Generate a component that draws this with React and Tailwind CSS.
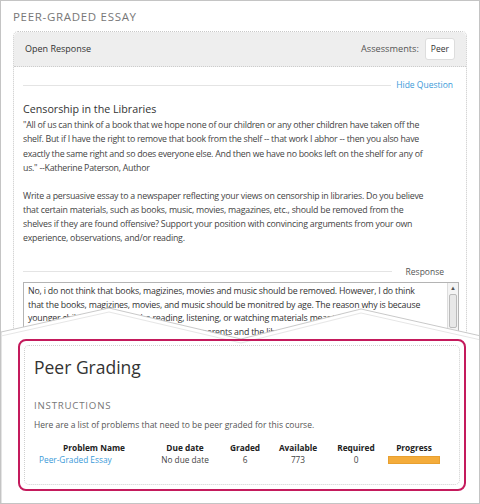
import React from 'react';

const columns = ['Problem Name', 'Due date', 'Graded', 'Available', 'Required', 'Progress'];

const quote = [
  '"All of us can think of a book that we hope none of our children or any other children have taken off the',
  'shelf. But if I have the right to remove that book from the shelf -- that work I abhor -- then you also have',
  'exactly the same right and so does everyone else. And then we have no books left on the shelf for any of',
  'us." --Katherine Paterson, Author',
];

const prompt = [
  'Write a persuasive essay to a newspaper reflecting your views on censorship in libraries. Do you believe',
  'that certain materials, such as books, music, movies, magazines, etc., should be removed from the',
  'shelves if they are found offensive? Support your position with convincing arguments from your own',
  'experience, observations, and/or reading.',
];

const answer = [
  'No, i do not think that books, magizines, movies and music should be removed. However, I do think',
  'that the books, magizines, movies, and music should be monitred by age. The reason why is because',
  'younger children should not be reading, listening, or watching materials meant for teenagers,',
  'or adults, and it should be monitored by the parents and the library.',
];

const Scrollbar = () => (
  <div className="flex flex-col w-[11px] border-l border-[#ddd] bg-[#f4f4f4]">
    <div className="h-[11px] flex items-center justify-center text-[6px] text-[#555]">▲</div>
    <div className="mx-[1px] h-[34px] rounded-[2px] border border-[#bbb] bg-[#e8e8e8]" />
  </div>
);

const App = () => {
  return (
    <div className="relative w-[480px] h-[504px] overflow-hidden border border-[#c4c4c4] bg-white font-['Open_Sans',sans-serif] text-[#333]">
      <div className="pl-[12px] pr-[12px] pt-[8px]">
        <h1 className="text-[11.5px] tracking-[0.06em] text-[#777] leading-[16px]">PEER-GRADED ESSAY</h1>

        <div className="mt-[6px] rounded-t-[5px] border border-dotted border-[#c8c8c8]">
          <div className="h-[35px] bg-[#eee] rounded-t-[5px] border-b border-dotted border-[#ccc] flex items-center justify-between pl-[11px] pr-[11px]">
            <span className="text-[9px]">Open Response</span>
            <div className="flex items-center gap-[6px]">
              <span className="text-[9.2px] text-[#555]">Assessments:</span>
              <span className="h-[22px] px-[5px] flex items-center bg-white border border-[#ddd] rounded-[3px] text-[8.5px]">Peer</span>
            </div>
          </div>

          <div className="bg-white pl-[9px] pr-[7px] pt-[12px] h-[430px]">
            <div className="flex items-center gap-[5px] pr-[6px]">
              <div className="flex-1 border-t border-[#e4e4e4]" />
              <a className="text-[8.5px] text-[#3a9ad9]">Hide Question</a>
            </div>

            <h2 className="mt-[9px] text-[10.7px] leading-[16px]">Censorship in the Libraries</h2>
            <div className="mt-[1px] text-[8.8px] leading-[14.4px] tracking-[-0.26px] text-[#444] whitespace-nowrap">
              {quote.map((l) => (
                <div key={l}>{l}</div>
              ))}
            </div>
            <div className="mt-[15px] text-[8.8px] leading-[13.8px] tracking-[-0.22px] text-[#444] whitespace-nowrap">
              {prompt.map((l) => (
                <div key={l}>{l}</div>
              ))}
            </div>

            <div className="mt-[20px] flex items-center gap-[14px] pr-[15px]">
              <div className="flex-1 border-t border-[#e4e4e4]" />
              <span className="text-[8.5px] text-[#555]">Response</span>
            </div>

            <div className="mt-[4px] h-[60px] border border-[#b4b4b4] flex">
              <div className="flex-1 overflow-hidden pl-[4px] pt-[2px] text-[8.8px] leading-[13.5px] tracking-[-0.2px] text-[#333] whitespace-nowrap">
                {answer.map((l) => (
                  <div key={l}>{l}</div>
                ))}
              </div>
              <Scrollbar />
            </div>
          </div>
        </div>
      </div>

      {/* callout */}
      <svg className="absolute left-0 top-0" width="480" height="504">
        <polygon points="0,331 108,307 240,338 360,308 480,335 480,504 0,504" fill="#fff" stroke="#c9c9c9" strokeWidth="1" />
        <polyline points="0,335 108,311 240,342 360,312 480,339" fill="none" stroke="#e6e6e6" strokeWidth="1" />
      </svg>

      <div className="absolute left-[17px] top-[338px] w-[448px] h-[152px] rounded-[8px] border-2 border-[#c41a5c] p-[4px]">
        <div className="h-full rounded-[5px] border border-dotted border-[#cfcfcf] pl-[9px] pr-[10px] pt-[9px]">
          <h2 className="text-[17.5px] leading-[24px] text-[#333]">Peer Grading</h2>
          <h3 className="mt-[20px] text-[9.7px] tracking-[0.08em] text-[#777] leading-[14px]">INSTRUCTIONS</h3>
          <p className="mt-[6px] text-[8.5px] leading-[12px] text-[#555]">
            Here are a list of problems that need to be peer graded for this course.
          </p>
          <div className="mt-[11px] -ml-[1px] grid grid-cols-[122px_60px_60px_46px_70px_46px] text-[8.3px] leading-[12px] text-center">
            {columns.map((c) => (
              <span key={c} className="font-bold text-[#222] whitespace-nowrap">{c}</span>
            ))}
            <a className="text-[#3a9ad9] text-left pl-[6px] whitespace-nowrap">Peer-Graded Essay</a>
            <span className="text-[#444] whitespace-nowrap">No due date</span>
            <span className="text-[#444]">6</span>
            <span className="text-[#444]">773</span>
            <span className="text-[#444]">0</span>
            <div className="flex items-center justify-center">
              <div className="shrink-0 w-[52px] h-[8px] bg-[#f4ac3b] border border-[#e8a030]" />
            </div>
          </div>
        </div>
      </div>
    </div>
  );
};

export default App;
